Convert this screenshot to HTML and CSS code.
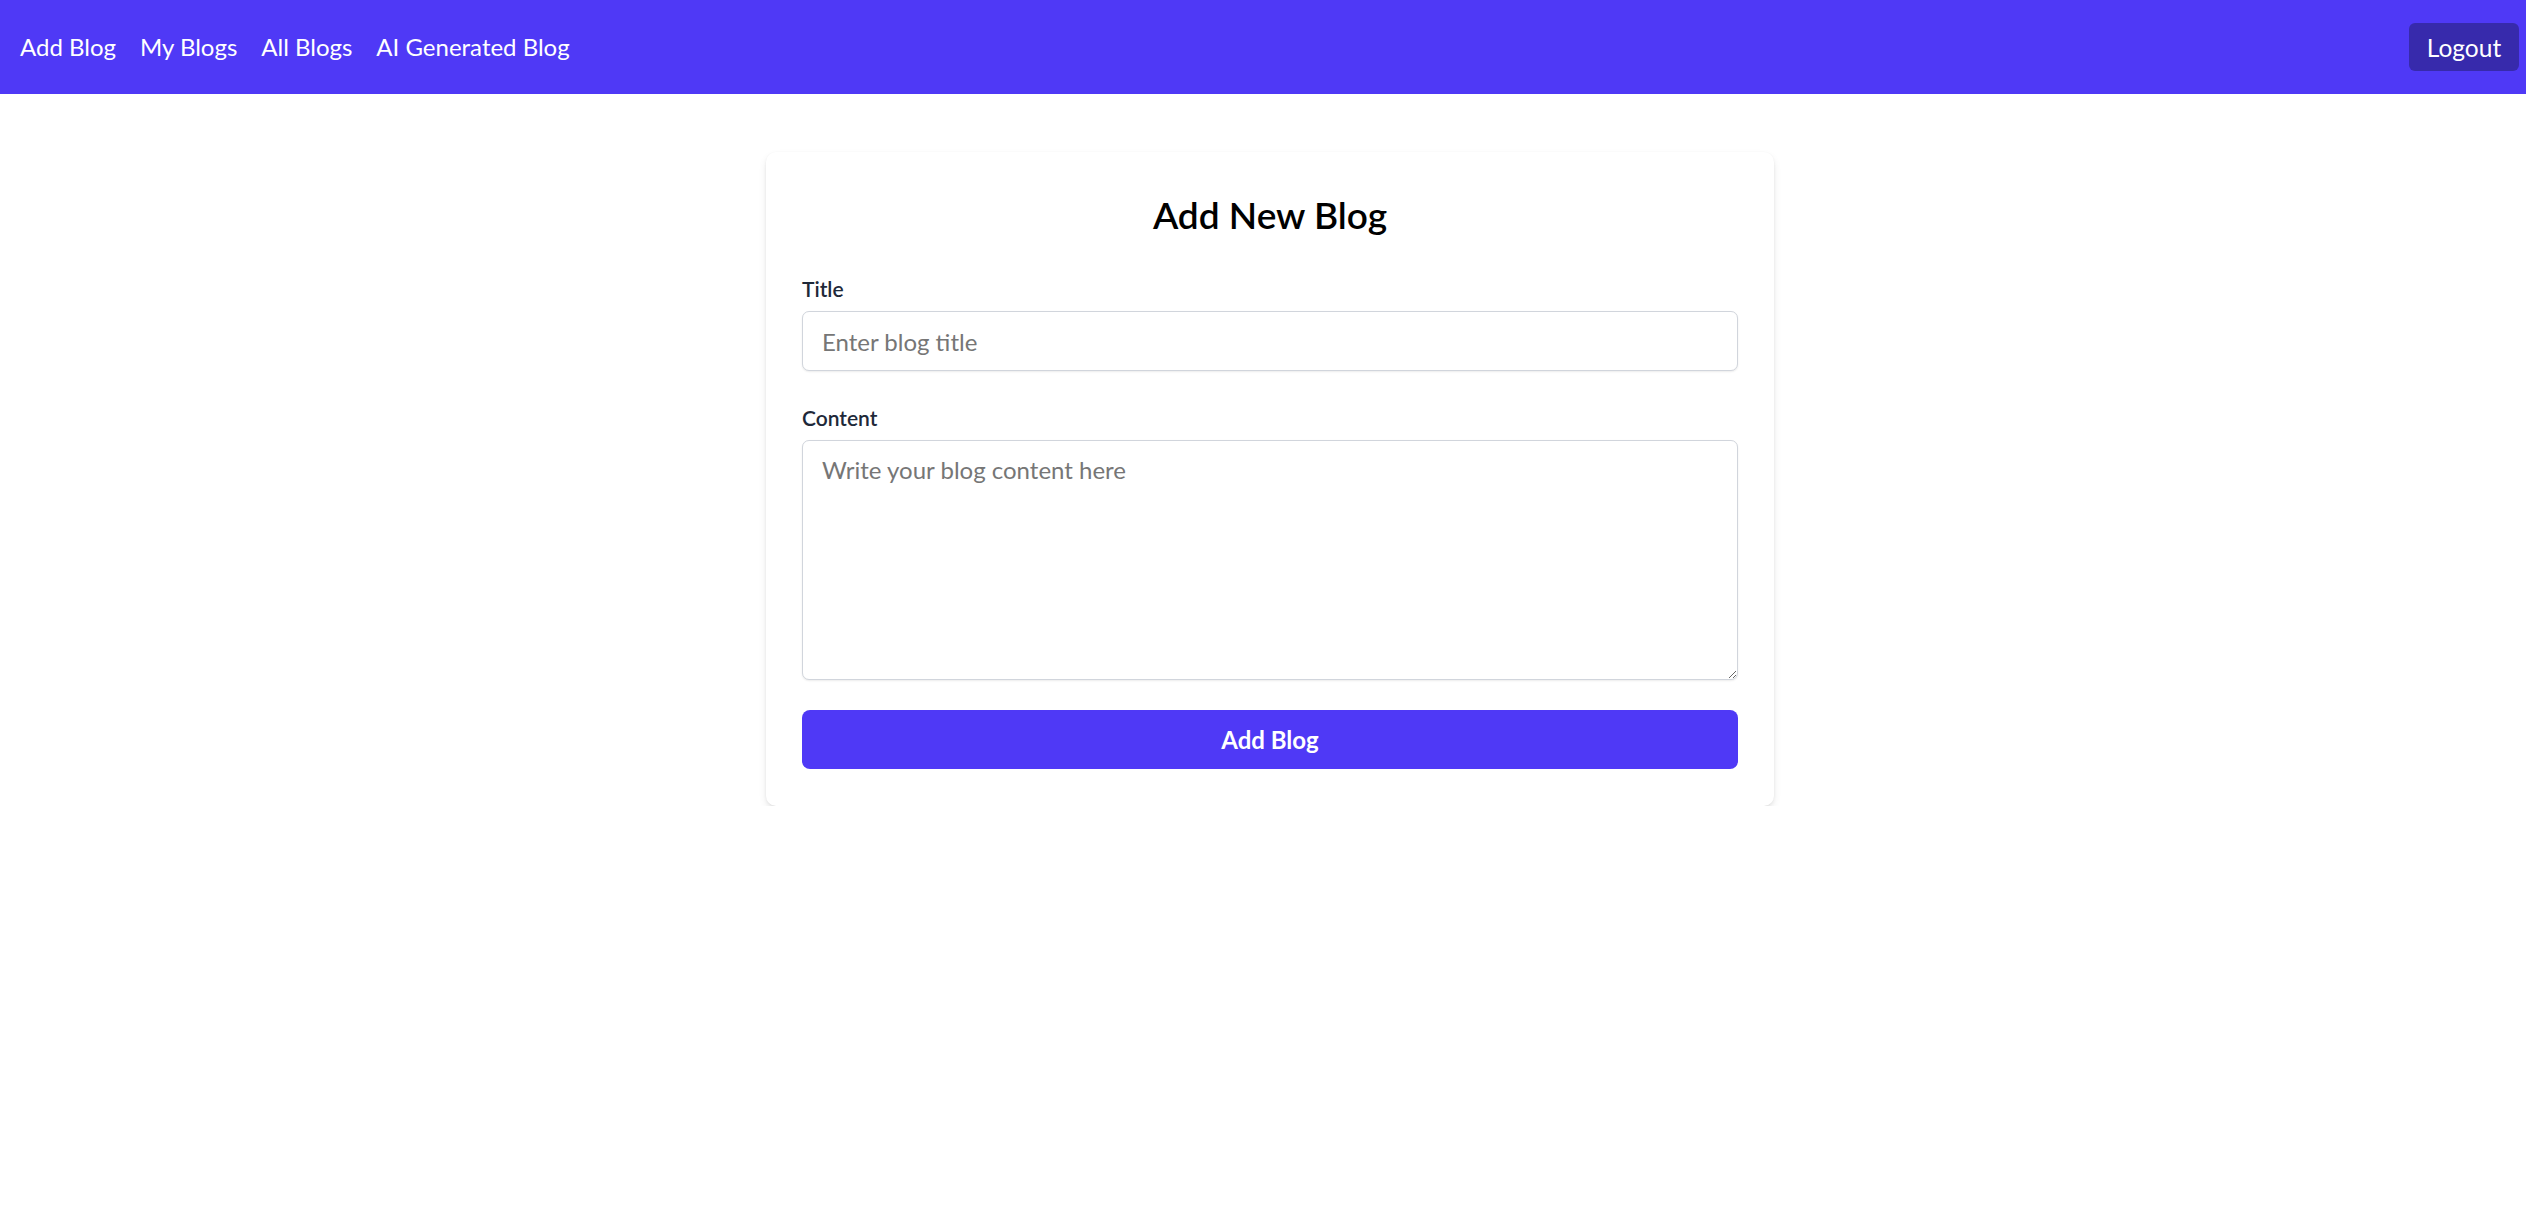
FILE: index.html
```html
<!DOCTYPE html>
<html lang="en">
<head>
<meta charset="utf-8">
<title>Add Blog</title>
<link rel="stylesheet" href="styles.css">
</head>
<body>
<nav class="navbar">
  <div class="nav-links">
    <a href="#" class="nav-link">Add Blog</a>
    <a href="#" class="nav-link">My Blogs</a>
    <a href="#" class="nav-link">All Blogs</a>
    <a href="#" class="nav-link">AI Generated Blog</a>
  </div>
  <button class="logout-btn" type="button">Logout</button>
</nav>
<main class="page">
  <section class="card">
    <h2 class="card-title">Add New Blog</h2>
    <form class="blog-form">
      <div class="field field-title">
        <label class="field-label" for="title">Title</label>
        <input class="text-input" id="title" type="text" placeholder="Enter blog title">
      </div>
      <div class="field field-content">
        <label class="field-label" for="content">Content</label>
        <textarea class="text-area" id="content" placeholder="Write your blog content here"></textarea>
      </div>
      <button class="submit-btn" type="button">Add Blog</button>
    </form>
  </section>
</main>
</body>
</html>
```
FILE: styles.css
```css
* { box-sizing: border-box; }
html, body { margin: 0; padding: 0; background: #ffffff; }
body { font-family: "Lato", "Noto Sans", sans-serif; color: #000; }

.navbar {
  height: 94px;
  background: #4f39f6;
  display: flex;
  align-items: center;
  justify-content: space-between;
  padding: 0 7px 0 20px;
}
.nav-links { display: flex; align-items: center; gap: 24px; }
.nav-link {
  color: #ffffff;
  text-decoration: none;
  font-size: 24px;
  line-height: 32px;
}
.logout-btn {
  width: 110px;
  height: 48px;
  border: none;
  border-radius: 6px;
  background: #372aac;
  color: #ffffff;
  font-family: inherit;
  font-size: 24.5px;
  padding: 0;
}

.page { padding-top: 58px; }
.card {
  width: 1008px;
  margin-left: calc(50% - 497px);
  background: #fff;
  border-radius: 10px;
  box-shadow: 0 4px 8px -1px rgba(0,0,0,0.1), 0 2px 5px -2px rgba(0,0,0,0.1), 0 0 2px rgba(0,0,0,0.03);
  padding: 39px 36px 37px 36px;
}
.card-title {
  margin: 0 0 36px;
  text-align: center;
  font-size: 37px;
  line-height: 48px;
  font-weight: 600;
  color: #000;
}
.blog-form { display: flex; flex-direction: column; }
.field { display: flex; flex-direction: column; }
.field-title { margin-bottom: 33px; }
.field-content { margin-bottom: 30px; }
.field-label {
  font-size: 21px;
  line-height: 28px;
  font-weight: 600;
  color: #1e2939;
  margin-bottom: 8px;
}
.text-input, .text-area {
  width: 100%;
  border: 1px solid #d1d5dc;
  border-radius: 7px;
  box-shadow: 0 1px 2px rgba(0,0,0,0.08);
  font-family: inherit;
  font-size: 24px;
  color: #1e2939;
  padding: 0 19px;
  background: #fff;
}
.text-input { height: 60px; }
.text-area { height: 240px; padding-top: 13px; resize: vertical; line-height: 32px; }
.text-input::placeholder, .text-area::placeholder { color: #767676; }
.submit-btn {
  height: 59px;
  border: none;
  border-radius: 8px;
  background: #4f39f6;
  color: #fff;
  font-family: inherit;
  font-size: 24px;
  font-weight: 700;
}
```
